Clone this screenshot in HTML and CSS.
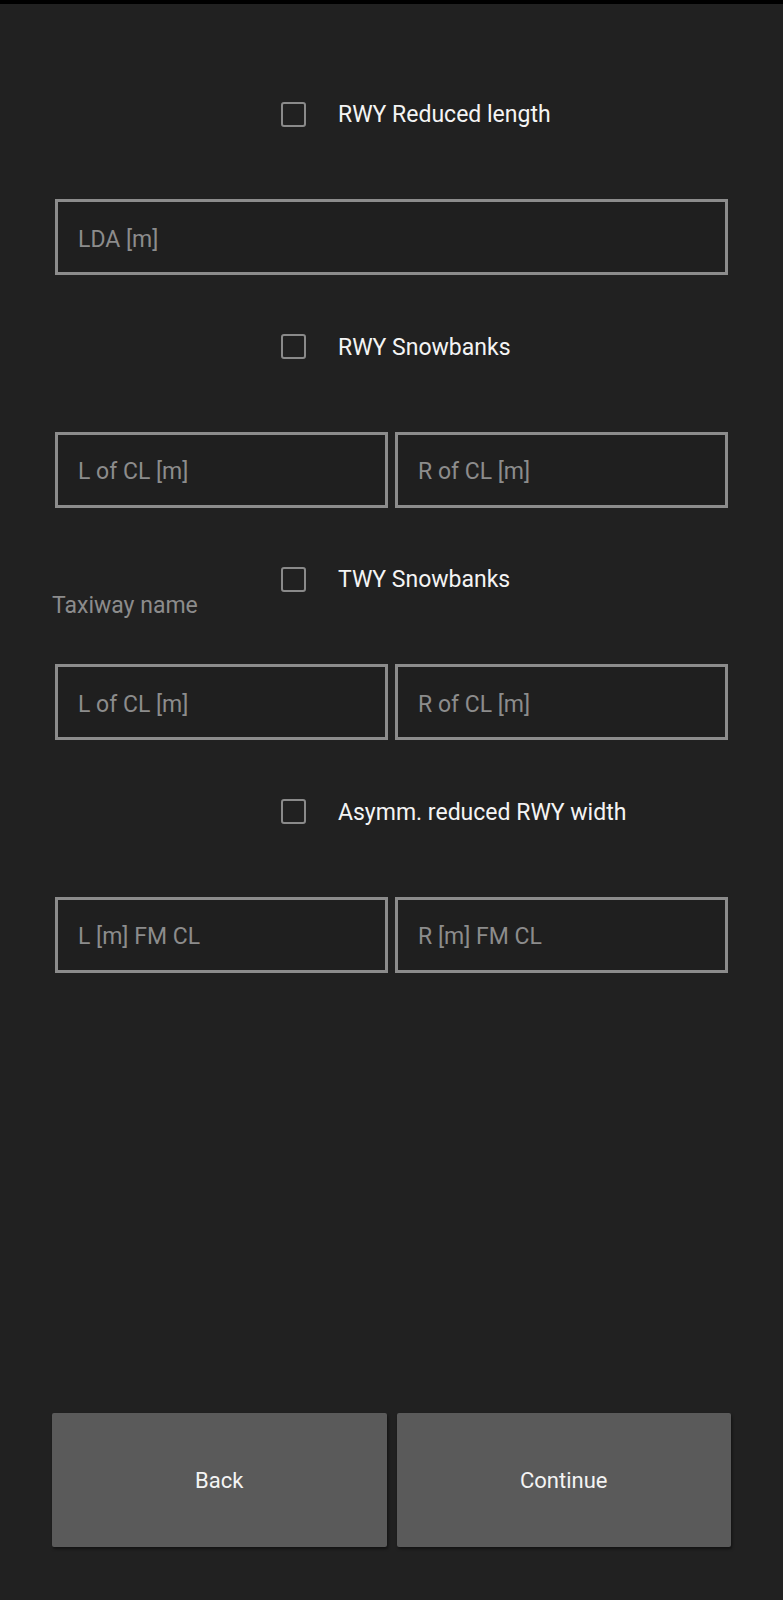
FILE: index.html
```html
<!DOCTYPE html>
<html lang="en">
<head>
  <meta charset="UTF-8" />
  <meta name="viewport" content="width=device-width, initial-scale=1" />
  <title>Contamination</title>
  <link rel="stylesheet" href="styles.css">
</head>
<body>
  <div class="status-bar"></div>
  <div class="screen">
    <div class="form">
      <div class="section">
        <label class="check-row">
          <input type="checkbox" class="check" />
          <span class="check-text">RWY Reduced length</span>
        </label>
        <div class="field-row">
          <input class="field" type="number" placeholder="LDA [m]" />
        </div>
      </div>

      <div class="section">
        <label class="check-row">
          <input type="checkbox" class="check" />
          <span class="check-text">RWY Snowbanks</span>
        </label>
        <div class="field-row">
          <input class="field" type="number" placeholder="L of CL [m]" />
          <input class="field" type="number" placeholder="R of CL [m]" />
        </div>
      </div>

      <div class="section">
        <div class="check-row with-hint">
          <span class="hint">Taxiway name</span>
          <input type="checkbox" class="check" id="twy" />
          <label class="check-text" for="twy">TWY Snowbanks</label>
        </div>
        <div class="field-row">
          <input class="field" type="number" placeholder="L of CL [m]" />
          <input class="field" type="number" placeholder="R of CL [m]" />
        </div>
      </div>

      <div class="section">
        <label class="check-row">
          <input type="checkbox" class="check" />
          <span class="check-text">Asymm. reduced RWY width</span>
        </label>
        <div class="field-row">
          <input class="field" type="number" placeholder="L [m] FM CL" />
          <input class="field" type="number" placeholder="R [m] FM CL" />
        </div>
      </div>
    </div>

    <div class="button-row">
      <button class="btn">Back</button>
      <button class="btn">Continue</button>
    </div>
  </div>
</body>
</html>
```

FILE: styles.css
```css
*, *::before, *::after {
  box-sizing: border-box;
}
body {
  margin: 0;
  background: #212121;
  color: #f4f4f4;
  font-family: Roboto, 'Noto Sans', sans-serif;
  font-size: 23px;
}
.status-bar {
  height: 4px;
  background: #000;
}
.screen {
  min-height: 1596px;
  display: flex;
  flex-direction: column;
}
.form {
  padding: 85px 55px 0 55px;
}
.section {
  padding-bottom: 46.5px;
}
.check-row {
  display: flex;
  align-items: center;
  height: 50px;
  padding-left: 226px;
  cursor: pointer;
}
.check {
  appearance: none;
  -webkit-appearance: none;
  margin: 0;
  width: 25px;
  height: 25px;
  border: 2.5px solid #8a8a8a;
  border-radius: 3px;
  background: transparent;
  flex-shrink: 0;
}
.check:checked {
  background: #8a8a8a;
}
.check-text {
  margin-left: 32px;
  line-height: 28px;
  padding-top: 2px;
  color: #f4f4f4;
}
.check-row.with-hint {
  padding-left: 0;
}
.hint {
  width: 226px;
  margin-left: -3px;
  margin-right: 3px;
  align-self: flex-end;
  margin-bottom: -15px;
  line-height: 26px;
  color: #8c8c8c;
}
.field-row {
  display: flex;
  gap: 7px;
  margin-top: 60px;
}
.field {
  flex: 1;
  min-width: 0;
  height: 76px;
  border: 3.5px solid #8c8c8c;
  border-radius: 0;
  background: #1f1f1f;
  padding: 4px 20px 0 20px;
  font-family: inherit;
  font-size: 23px;
  color: #f4f4f4;
  outline: none;
}
.field::placeholder {
  color: #8c8c8c;
}
.field::-webkit-inner-spin-button,
.field::-webkit-outer-spin-button {
  -webkit-appearance: none;
  margin: 0;
}
.button-row {
  margin-top: auto;
  display: flex;
  gap: 10px;
  padding: 0 52px 53px 52px;
}
.btn {
  flex: 1;
  height: 134px;
  border: none;
  border-radius: 2px;
  background: #5a5a5a;
  color: #f4f4f4;
  font-family: inherit;
  font-size: 22px;
  box-shadow: 1px 2px 3px rgba(0, 0, 0, 0.45);
  cursor: pointer;
}
.btn:hover {
  background: #626262;
}
```
